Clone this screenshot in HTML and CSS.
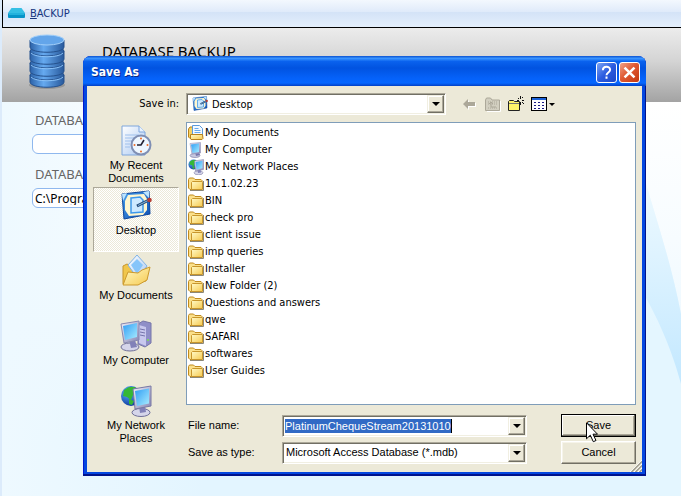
FILE: index.html
```html
<!DOCTYPE html>
<html lang="en">
<head>
<meta charset="utf-8">
<title>Database Backup</title>
<link rel="stylesheet" href="styles.css">
</head>
<body>
<svg class="defs" aria-hidden="true">
  <defs>
    <linearGradient id="gFolder" x1="0" y1="0" x2="1" y2="1"><stop offset="0" stop-color="#fffac8"/><stop offset="1" stop-color="#f6ca50"/></linearGradient>
    <linearGradient id="gScreen" x1="0" y1="0" x2="1" y2="1"><stop offset="0" stop-color="#2f9df4"/><stop offset="1" stop-color="#a8ecff"/></linearGradient>
    <linearGradient id="gMetal" x1="0" y1="0" x2="1" y2="1"><stop offset="0" stop-color="#f2f2fb"/><stop offset="1" stop-color="#8585b4"/></linearGradient>
    <linearGradient id="gPaper" x1="0" y1="0" x2="1" y2="1"><stop offset="0" stop-color="#ffffff"/><stop offset="1" stop-color="#a9c8f2"/></linearGradient>
    <linearGradient id="gBlue" x1="0" y1="0" x2="1" y2="1"><stop offset="0" stop-color="#4ba2ee"/><stop offset="1" stop-color="#0d4fb4"/></linearGradient>
    <linearGradient id="gDisk" x1="0" y1="0" x2="1" y2="0"><stop offset="0" stop-color="#2c62a8"/><stop offset=".4" stop-color="#66aaf0"/><stop offset="1" stop-color="#28599c"/></linearGradient>
    <radialGradient id="gGlobe" cx=".35" cy=".3" r=".8"><stop offset="0" stop-color="#59b4ff"/><stop offset="1" stop-color="#0a2f96"/></radialGradient>
    <symbol id="folder" viewBox="0 0 16 16">
      <path d="M2 14.500h13.500V5" fill="none" stroke="#8b8778"/>
      <path d="M.5 12V3.500l1-1.500h4l1.500 1.500h6l1 1V13l-1 .5H2z" fill="#fbe08a" stroke="#c08a1e"/>
      <path d="M3.500 13.500V6.500l1-1h9.500l.5 1v7z" fill="url(#gFolder)" stroke="#c8962c"/>
    </symbol>
    <symbol id="docs-small" viewBox="0 0 16 16">
      <path d="M.5 12V4l1.500-2h3v11.500H2z" fill="#f6d264" stroke="#b8821c"/>
      <path d="M4.500.5h7l3 3V12h-10z" fill="#f4faff" stroke="#5b9bdc"/>
      <path d="M6.500 3.500h4M6.500 5.500h6M6.500 7.500h6" stroke="#66aaf0"/>
      <path d="M2.500 14V9.500h12l.5 4-1 1H3z" fill="url(#gFolder)" stroke="#b8821c"/>
    </symbol>
    <symbol id="monitor" viewBox="0 0 16 16">
      <ellipse cx="7" cy="13.500" rx="5" ry="2" fill="#c9c9e0" stroke="#7373a0" stroke-width=".6"/>
      <path d="M7 10l4 0 1 3-4 1z" fill="#7777ae"/>
      <path d="M2 1.500L12.500.5v10.500L4 12z" fill="url(#gMetal)" stroke="#9696b8" stroke-width=".6"/>
      <path d="M3 2.500l8-1v8.500L4.500 11z" fill="url(#gScreen)"/>
    </symbol>
    <symbol id="network" viewBox="0 0 32 32">
      <circle cx="11" cy="11" r="10" fill="url(#gGlobe)"/>
      <path d="M4 5l5-3 6 0 2 4-4 4-2 5-4-3-4-1zM9 14l5 2-2 4-3-1z" fill="#35b836"/>
      <ellipse cx="21" cy="27.500" rx="9" ry="4" fill="#d5d5ea" stroke="#6f6f98"/>
      <path d="M19 21h6l1 6-6 1z" fill="#8181b8"/>
      <path d="M13 4l18-3v20l-16 3z" fill="url(#gMetal)" stroke="#7878a4"/>
      <path d="M15 6l14-2.500v15L17 21z" fill="url(#gScreen)"/>
    </symbol>
    <symbol id="desktop" viewBox="0 0 32 32">
      <path d="M2 4l27-3 1 23L4 29z" fill="url(#gBlue)" stroke="#0c459c"/>
      <path d="M2 4l5-1-4 8zM23 2l6-1v7z" fill="#bce4ff"/>
      <path d="M8 5l16-1 3 5v11l-4 5-14 1-4-6V11z" fill="#fff6cf"/>
      <path d="M11 8l9-1 3 3v12l-12 1z" fill="#cde9ff" stroke="#3c98ec" stroke-width="1.500"/>
      <path d="M17 16l12-6" stroke="#204878" stroke-width="3"/>
      <path d="M18 15.500l10-5" stroke="#8fbce0" stroke-width="1"/>
      <circle cx="29.500" cy="10" r="2.300" fill="#b63d34"/>
    </symbol>
  </defs>
</svg>

<div class="app">
  <nav class="menubar">
    <a class="menu-link" href="#backup">
      <svg class="menu-icon" viewBox="0 0 17 11" aria-hidden="true"><path d="M3.500 0h10L17 5H0z" fill="#35bfe4"/><rect y="5" width="17" height="5" rx="1" fill="#0794c8"/><path d="M1 6h15" stroke="#43d0f2"/></svg>
      <span><u>B</u>ACKUP</span>
    </a>
  </nav>
  <header class="banner">
    <svg class="db-icon" viewBox="0 0 38 56" aria-hidden="true">
      <ellipse cx="19" cy="51" rx="18" ry="4" fill="#777" opacity=".5"/>
      <g fill="url(#gDisk)" stroke="#24508c">
        <path d="M2 41v7c0 7 34 7 34 0v-7z"/><ellipse cx="19" cy="41" rx="17" ry="5"/>
        <path d="M2 29v8c0 7 34 7 34 0v-8z"/><ellipse cx="19" cy="29" rx="17" ry="5"/>
        <path d="M2 17v8c0 7 34 7 34 0v-8z"/><ellipse cx="19" cy="17" rx="17" ry="5"/>
        <path d="M2 6v7c0 7 34 7 34 0V6z"/><ellipse cx="19" cy="6" rx="17" ry="5" fill="#63a5ea" stroke="#a3d0fa"/>
      </g>
      <g fill="none" stroke="#8cc4fa"><path d="M3 19c4 5 28 5 32 0M3 31c4 5 28 5 32 0M3 43c4 5 28 5 32 0"/></g>
    </svg>
    <h1>DATABASE BACKUP</h1>
  </header>
  <main class="page">
    <svg class="swoosh" viewBox="0 0 41 394" preserveAspectRatio="none" aria-hidden="true">
      <defs>
        <linearGradient id="gSw" x1="0" y1="0" x2="0" y2="1"><stop offset="0" stop-color="#f2fbff"/><stop offset="1" stop-color="#c3e8ff"/></linearGradient>
        <linearGradient id="gSwBack" x1="0" y1="0" x2="0" y2="1"><stop offset="0" stop-color="#f4fbff"/><stop offset=".5" stop-color="#e4f6ff"/></linearGradient>
      </defs>
      <path d="M0 60C14 112 30 155 41 212V394H0z" fill="url(#gSwBack)"/>
      <path d="M0 60C14 112 30 155 41 212V282C30 240 12 205 0 186z" fill="url(#gSw)"/>
    </svg>
    <form class="fields">
      <label for="dbname">DATABASE</label>
      <input id="dbname" type="text">
      <label for="dbpath">DATABASE</label>
      <input id="dbpath" type="text" value="C:\Program">
    </form>
  </main>
</div>

<section class="dialog" role="dialog" aria-labelledby="dlgtitle">
  <div class="titlebar">
    <h2 id="dlgtitle">Save As</h2>
    <button class="cap help" type="button" aria-label="Help"><svg viewBox="0 0 21 21"><path d="M6.500 8c0-5 8-5 8-.5 0 3-4 3-4 6M10.500 15v2.500" fill="none" stroke="#fff" stroke-width="2.200"/></svg></button>
    <button class="cap close" type="button" aria-label="Close"><svg viewBox="0 0 21 21"><path d="M5 5l11 11M16 5L5 16" stroke="#fff" stroke-width="2.800"/></svg></button>
  </div>
  <form class="body">
    <label class="lookin-label" for="lookin">Save in:</label>
    <div class="lookbar">
      <div class="combo lookin">
        <svg class="icon16" aria-hidden="true"><use href="#desktop"/></svg>
        <select id="lookin"><option>Desktop</option></select>
        <span class="arrow"></span>
      </div>
      <div class="tools">
        <button type="button" aria-label="Back"><svg viewBox="0 0 16 16"><path d="M2 9l5-5v3h7v4H7v3z" fill="#fff"/><path d="M1 8l5-5v3h7v4H6v3z" fill="#aca899"/></svg></button>
        <button type="button" aria-label="Up one level"><svg viewBox="0 0 16 16"><path d="M2 15.500h13.500V5" fill="none" stroke="#fff"/><path d="M.5 14.500V4l1-2h4l1.500 2h7.500v10.500z" fill="#d2cfc0" stroke="#aca899"/><path d="M3 6h10M3 8h10M3 12h10" stroke="#aca899" stroke-dasharray="1 1"/><path d="M6 6v5h5M4 8l2-2 2 2" fill="none" stroke="#aca899"/></svg></button>
        <button type="button" aria-label="Create new folder"><svg viewBox="0 0 16 16"><path d="M.5 14.500V5.500l1-1h4l1 1h5v9z" fill="#fff36b" stroke="#222"/><path d="M1 7.500h10" stroke="#777"/><path d="M12.500 0v3M12.500 6v3M9 4.500h2M14 4.500h2M10 2l1 1M15 1l-1 1M14 6l2 2" stroke="#111"/></svg></button>
        <button class="views" type="button" aria-label="View menu"><svg viewBox="0 0 24 16"><rect x=".5" y="1.500" width="15" height="13" fill="#fff" stroke="#000"/><path d="M1 3h14" stroke="#1c62d8" stroke-width="2"/><path d="M3 6.500h2M7 6.500h2M11 6.500h2M3 9.500h2M7 9.500h2M11 9.500h2M3 12.500h2M7 12.500h2M11 12.500h2" stroke="#1c1c88" stroke-width="1"/><path d="M18 7h6l-3 3z"/></svg></button>
      </div>
    </div>

    <nav class="places" aria-label="Places">
      <button type="button"><svg viewBox="0 0 32 32"><path d="M2 1h17l6 6v23H2z" fill="url(#gPaper)" stroke="#7fa6dc"/><path d="M19 1v6h6" fill="#e9f3ff" stroke="#7fa6dc"/><path d="M5 10h14M5 13h9M5 16h7M5 19h5M5 22h5" stroke="#9fc0ec"/><circle cx="21" cy="20" r="9.500" fill="#eef7ff" stroke="#7f8fb4" stroke-width="2"/><g fill="#ee6a24"><circle cx="21" cy="13.500" r="1"/><circle cx="21" cy="26.500" r="1"/><circle cx="14.500" cy="20" r="1"/><circle cx="27.500" cy="20" r="1"/></g><path d="M24 15l-3 5h-4" fill="none" stroke="#223" stroke-width="1.600"/></svg><span>My Recent Documents</span></button>
      <button class="current" type="button"><svg><use href="#desktop"/></svg><span>Desktop</span></button>
      <button type="button"><svg viewBox="0 0 32 32"><path d="M3 29V11l4-2 5 3h14v14z" fill="#f0c64c" stroke="#c8952a"/><path d="M8 10L17 0l10 11-9 13z" fill="url(#gPaper)" stroke="#7fb2e6"/><path d="M11 10l6-6 6 6-6 9z" fill="#86c5fa"/><path d="M3 30l5-13 10 1 4-3 8-3-3 13-9 5z" fill="url(#gFolder)" stroke="#cc992c"/></svg><span>My Documents</span></button>
      <button type="button"><svg viewBox="0 0 32 32"><path d="M18 4l5-3 8 2v20l-6 4-7-3z" fill="#8f8fc8" stroke="#7777a8"/><path d="M19 5l7 2v19l-7-3z" fill="#c8c8ee"/><path d="M20 9l5 1M20 12l5 1M20 15l5 1" stroke="#7575ac"/><circle cx="28" cy="20" r="1" fill="#7ae64c"/><ellipse cx="10" cy="27" rx="9" ry="4" fill="#d5d5ea" stroke="#6f6f98"/><path d="M9 20h6l2 7-6 1z" fill="#8181b8"/><path d="M1 4l18-3v19L4 23z" fill="url(#gMetal)" stroke="#8888b0"/><path d="M3 6l14-3v14L5 20z" fill="url(#gScreen)"/></svg><span>My Computer</span></button>
      <button type="button"><svg><use href="#network"/></svg><span>My Network Places</span></button>
    </nav>

    <div class="main">
      <ul class="files">
        <li><svg><use href="#docs-small"/></svg>My Documents</li>
        <li><svg><use href="#monitor"/></svg>My Computer</li>
        <li><svg><use href="#network"/></svg>My Network Places</li>
        <li><svg><use href="#folder"/></svg>10.1.02.23</li>
        <li><svg><use href="#folder"/></svg>BIN</li>
        <li><svg><use href="#folder"/></svg>check pro</li>
        <li><svg><use href="#folder"/></svg>client issue</li>
        <li><svg><use href="#folder"/></svg>imp queries</li>
        <li><svg><use href="#folder"/></svg>Installer</li>
        <li><svg><use href="#folder"/></svg>New Folder (2)</li>
        <li><svg><use href="#folder"/></svg>Questions and answers</li>
        <li><svg><use href="#folder"/></svg>qwe</li>
        <li><svg><use href="#folder"/></svg>SAFARI</li>
        <li><svg><use href="#folder"/></svg>softwares</li>
        <li><svg><use href="#folder"/></svg>User Guides</li>
      </ul>
      <div class="save-grid">
        <label for="fname">File name:</label>
        <div class="combo"><input id="fname" type="text" value="PlatinumChequeStream20131010"><span class="arrow"></span></div>
        <button class="btn default" type="submit">Save</button>
        <label for="ftype">Save as type:</label>
        <div class="combo"><select id="ftype"><option>Microsoft Access Database (*.mdb)</option></select><span class="arrow"></span></div>
        <button class="btn" type="button">Cancel</button>
      </div>
    </div>
  </form>
  <svg class="grip" viewBox="0 0 12 12" aria-hidden="true"><path d="M0 12L12 0M4 12l8-8M8 12l4-4" stroke="#fff"/><path d="M1.500 12L12 1.500M5.500 12L12 5.500M9.500 12L12 9.500" stroke="#a09d8e" stroke-width="1.500"/></svg>
  <svg class="pointer" viewBox="0 0 12 21" aria-hidden="true"><path d="M.5.8v16l3.800-3.600 3 6.500 2.700-1.200-3-6.300h4.500z" fill="#fff" stroke="#000"/></svg>
</section>
</body>
</html>
```
FILE: styles.css
```css
* { box-sizing: border-box; }

body {
  margin: 0;
  font-family: "DejaVu Sans Condensed", "Noto Sans", sans-serif;
  font-size: 11px;
  line-height: 13px;
  color: #000;
  background: #dcebfb;
}

button, input, select { font: inherit; color: inherit; }

.defs { position: absolute; width: 0; height: 0; }

/* application window */
.app {
  min-height: 100vh;
  padding-left: 2px;
  display: flex;
  flex-direction: column;
}

.menubar {
  height: 28px;
  padding: 0 5px;
  display: flex;
  align-items: center;
  border-left: 1px solid #000;
  border-bottom: 1px solid #000;
  background: linear-gradient(#f3f8fe, #dfeafa 45%, #d4e3f7 46%, #e4effc);
}

.menu-link {
  display: flex;
  align-items: center;
  gap: 5px;
  color: #15357e;
  text-decoration: none;
}

.menu-icon { width: 17px; height: 11px; }

.banner {
  height: 74px;
  padding: 6px 26px;
  display: flex;
  gap: 36px;
  background: linear-gradient(#ececec, #d4d4d4 45%, #a3a3a3);
}

.db-icon { width: 38px; height: 56px; }

.banner h1 {
  margin: 9px 0;
  font-family: "Noto Sans", sans-serif;
  font-size: 15px;
  line-height: 16px;
  font-weight: 400;
}

.page {
  flex: 1;
  position: relative;
  padding: 10px 33px;
  background: linear-gradient(90deg, #eef9ff, rgba(255, 255, 255, 0) 30%), linear-gradient(#fff, #f7fcff 35%, #e3f5ff 85%);
}

.swoosh { position: absolute; right: 0; top: 0; width: 41px; height: 100%; }

.fields {
  width: 260px;
  display: grid;
  grid-template-rows: 16px 20px 22px 20px;
  row-gap: 6px;
}

.fields label, .fields input {
  font-family: "Noto Sans", sans-serif;
  font-size: 12px;
}

.fields label {
  font-size: 13px;
  line-height: 16px;
  color: #666;
}

.fields label:nth-of-type(2) { padding-top: 6px; }

.fields input {
  min-width: 0;
  margin: 0 0 0 -3px;
  padding: 0 2px;
  border: 1px solid #8fb8ee;
  border-radius: 6px;
  background: #fff;
}

/* dialog */
.dialog {
  position: absolute;
  left: 83px;
  right: 35px;
  top: 56px;
  border-radius: 8px 8px 0 0;
  background: #0447e0;
  padding: 0 4px 4px;
  box-shadow: inset -1px -2px #00138c, inset 1px 0 #0019cf;
}

.titlebar {
  height: 30px;
  margin: 0 -4px;
  padding: 2px 6px 0 8px;
  display: flex;
  align-items: center;
  gap: 2px;
  border-radius: 8px 8px 0 0;
  background: linear-gradient(#0a52d2, #3a95ff 8%, #0a62ee 18%, #0153e0 40%, #0562fa 75%, #0667ff 90%, #0340c4);
}

.titlebar h2 {
  flex: 1;
  margin: 0;
  font-size: 12px;
  line-height: 16px;
  font-weight: 700;
  color: #fff;
  text-shadow: 1px 1px #0a2a86;
}

.cap {
  width: 21px;
  height: 21px;
  padding: 0;
  border: 1px solid #fff;
  border-radius: 3px;
  display: grid;
}

.cap svg { width: 19px; height: 19px; }
.help { background: linear-gradient(135deg, #7ba4f4, #2c5ce0 50%, #1c48c8); }
.close { background: linear-gradient(135deg, #f0a288, #e05a34 45%, #c43810); }

.body {
  padding: 7px 6px 8px;
  display: grid;
  grid-template-columns: 86px 1fr;
  column-gap: 7px;
  row-gap: 7px;
  background: #ece9d8;
}

.lookin-label { text-align: right; line-height: 21px; }

.lookbar { display: flex; align-items: center; gap: 16px; }
.lookin { width: 260px; }

.combo {
  height: 22px;
  padding: 1px;
  display: flex;
  align-items: center;
  background: #fff;
  border: 1px solid;
  border-color: #aca899 #fff #fff #aca899;
  box-shadow: inset 1px 1px #716f64, inset -1px -1px #f1efe2;
}

.combo select, .combo input {
  appearance: none;
  border: 0;
  outline: 0;
  margin: 0 auto 0 1px;
  padding: 0 1px;
  height: 16px;
  min-width: 0;
  background: transparent;
}

.combo input {
  field-sizing: content;
  height: 14px;
  padding: 0;
  color: #fff;
  background: #316ac5;
  border-right: 1px solid #000;
}

.icon16 { width: 16px; height: 16px; margin: 0 2px 0 4px; }

.arrow {
  flex: none;
  width: 17px;
  height: 18px;
  display: grid;
  place-items: center;
  background: #ece9d8;
  border: 1px solid;
  border-color: #f1efe2 #716f64 #716f64 #f1efe2;
  box-shadow: inset -1px -1px #aca899, inset 1px 1px #fff;
}

.arrow::before {
  content: "";
  border: 4px solid transparent;
  border-top-color: #000;
  border-bottom: 0;
}

.tools { display: flex; gap: 7px; }
.tools button { padding: 0; border: 0; background: none; display: block; }
.tools svg { display: block; width: 16px; height: 16px; }
.tools .views svg { width: 24px; }

.places { display: flex; flex-direction: column; }

.places, .save-grid { font-family: "Liberation Sans", sans-serif; }

.places button {
  height: 65px;
  padding: 2px 10px;
  border: 1px solid transparent;
  background: none;
  display: flex;
  flex-direction: column;
  align-items: center;
  gap: 2px;
}

.places button:not(:first-child):not(.current) { padding: 2px 0; }
.places button:last-child span { width: 66px; }
.places svg { width: 32px; height: 32px; flex: none; }
.places span { white-space: normal; }

.places .current {
  border-color: #aca899 #fff #fff #aca899;
  background: repeating-conic-gradient(#fff 0 25%, #ece9d8 0 50%) 0 0 / 2px 2px;
}

.files {
  min-height: 283px;
  margin: 0 0 9px;
  padding: 1px;
  list-style: none;
  background: #fff;
  border: 1px solid #7f9db9;
}

.files li {
  height: 17px;
  display: flex;
  align-items: center;
  gap: 1px;
}

.files svg { width: 16px; height: 16px; }

.save-grid {
  padding-left: 2px;
  display: grid;
  grid-template-columns: 94px 1fr 34px 75px;
  row-gap: 4px;
  align-items: center;
}

.btn {
  grid-column: 4;
  height: 23px;
  padding: 0;
  background: #ece9d8;
  border: 1px solid;
  border-color: #fff #716f64 #716f64 #fff;
  box-shadow: inset -1px -1px #aca899, inset 1px 1px #f6f4ea;
}

.default {
  border-color: #000;
  box-shadow: inset -1px -1px #716f64, inset 1px 1px #fff, inset -2px -2px #aca899;
}

.grip { position: absolute; right: 4px; bottom: 4px; width: 12px; height: 12px; }

/* pointer resting on the Save button */
.pointer { position: absolute; right: 48px; bottom: 33px; width: 12px; height: 21px; }
```
